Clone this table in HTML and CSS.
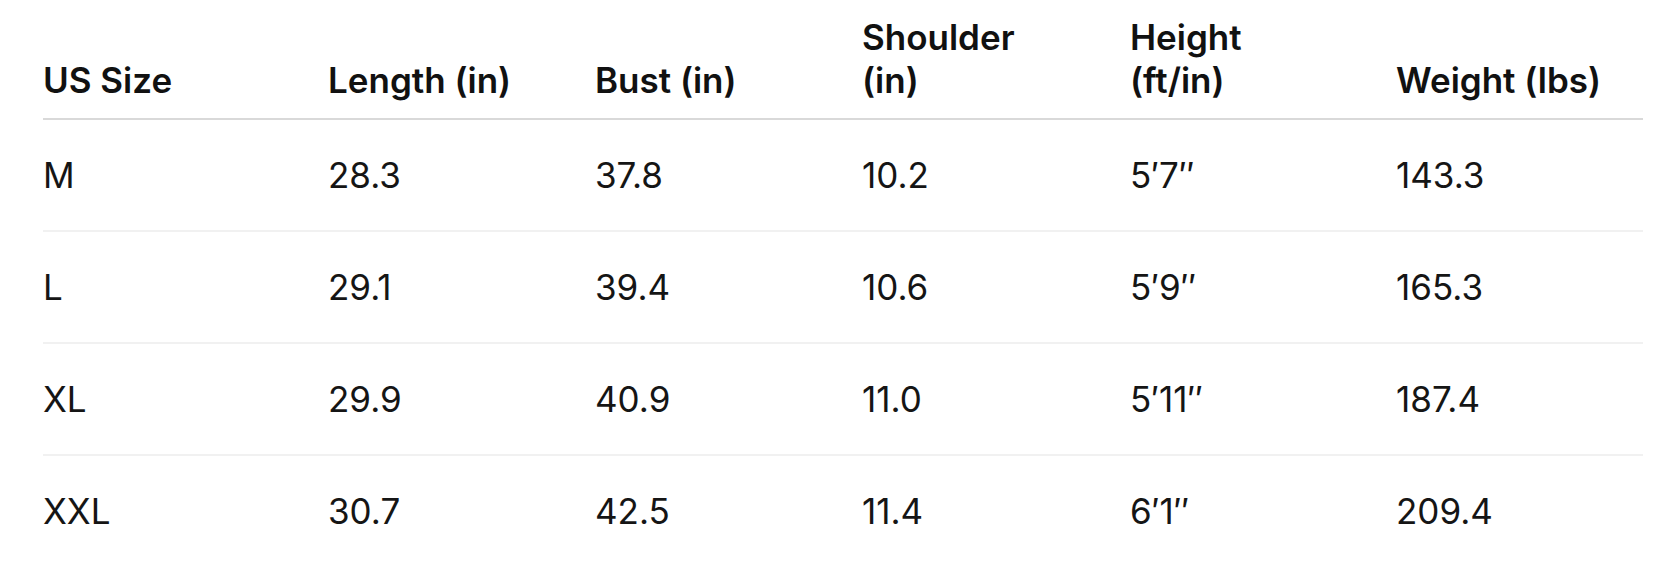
FILE: index.html
```html
<!DOCTYPE html>
<html lang="en">
<head>
<meta charset="utf-8">
<title>Size Chart</title>
<link rel="stylesheet" href="styles.css">
</head>
<body>
<div class="wrap">
  <table class="size-table">
    <colgroup>
      <col class="c-size">
      <col class="c-length">
      <col class="c-bust">
      <col class="c-shoulder">
      <col class="c-height">
      <col class="c-weight">
    </colgroup>
    <thead>
      <tr>
        <th>US Size</th>
        <th>Length (in)</th>
        <th>Bust (in)</th>
        <th>Shoulder<br>(in)</th>
        <th>Height<br>(ft/in)</th>
        <th>Weight (lbs)</th>
      </tr>
    </thead>
    <tbody>
      <tr><td>M</td><td>28.3</td><td>37.8</td><td>10.2</td><td>5′7″</td><td>143.3</td></tr>
      <tr><td>L</td><td>29.1</td><td>39.4</td><td>10.6</td><td>5′9″</td><td>165.3</td></tr>
      <tr><td>XL</td><td>29.9</td><td>40.9</td><td>11.0</td><td>5′11″</td><td>187.4</td></tr>
      <tr><td>XXL</td><td>30.7</td><td>42.5</td><td>11.4</td><td>6′1″</td><td>209.4</td></tr>
    </tbody>
  </table>
</div>
</body>
</html>
```

FILE: styles.css
```css
html, body {
  margin: 0;
  padding: 0;
  background: #ffffff;
}

body {
  font-family: Inter, "Open Sans", "Liberation Sans", sans-serif;
  color: #111111;
}

.wrap {
  padding: 0 34px 0 43px;
}

.size-table {
  width: 1600px;
  border-collapse: collapse;
  table-layout: fixed;
  font-size: 35px;
  line-height: 42.5px;
}

.c-size { width: 285px; }
.c-length { width: 267px; }
.c-bust { width: 267px; }
.c-shoulder { width: 268px; }
.c-height { width: 266px; }
.c-weight { width: 247px; }

.size-table th {
  text-align: left;
  vertical-align: bottom;
  font-weight: 600;
  color: #111111;
  padding: 16px 0 17px 0;
  border-bottom: 2px solid #d9d9d9;
}

.size-table td {
  text-align: left;
  font-weight: 400;
  color: #151515;
  padding: 34px 0 33.5px 0;
  border-bottom: 2px solid #f1f1f1;
}

.size-table tbody tr:last-child td {
  border-bottom: none;
}
```
